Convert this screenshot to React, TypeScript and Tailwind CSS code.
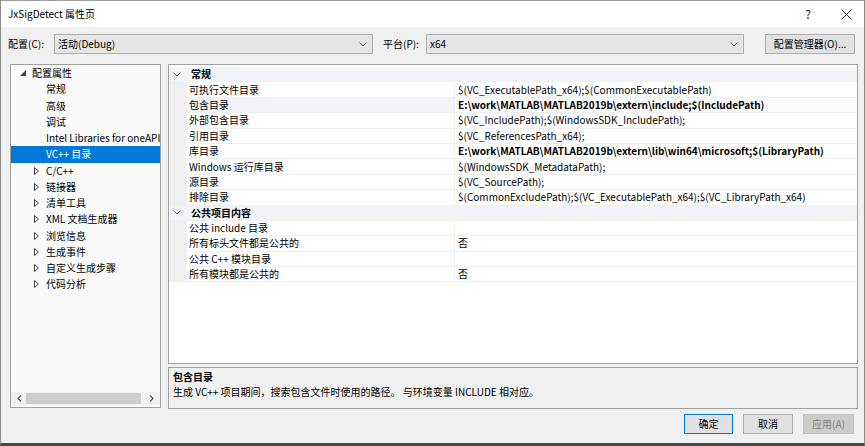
import React from 'react';

const font = "font-['Noto_Sans_CJK_SC','Noto_Sans',sans-serif]";

const treeItems: { label: string; kind: 'root' | 'leaf' | 'branch'; selected?: boolean }[] = [
  { label: '配置属性', kind: 'root' },
  { label: '常规', kind: 'leaf' },
  { label: '高级', kind: 'leaf' },
  { label: '调试', kind: 'leaf' },
  { label: 'Intel Libraries for oneAPI', kind: 'leaf' },
  { label: 'VC++ 目录', kind: 'leaf', selected: true },
  { label: 'C/C++', kind: 'branch' },
  { label: '链接器', kind: 'branch' },
  { label: '清单工具', kind: 'branch' },
  { label: 'XML 文档生成器', kind: 'branch' },
  { label: '浏览信息', kind: 'branch' },
  { label: '生成事件', kind: 'branch' },
  { label: '自定义生成步骤', kind: 'branch' },
  { label: '代码分析', kind: 'branch' },
];

type Row =
  | { type: 'cat'; name: string }
  | { type: 'prop'; name: string; value: string; bold?: boolean; selected?: boolean };

const rows: Row[] = [
  { type: 'cat', name: '常规' },
  { type: 'prop', name: '可执行文件目录', value: '$(VC_ExecutablePath_x64);$(CommonExecutablePath)' },
  { type: 'prop', name: '包含目录', value: 'E:\\work\\MATLAB\\MATLAB2019b\\extern\\include;$(IncludePath)', bold: true, selected: true },
  { type: 'prop', name: '外部包含目录', value: '$(VC_IncludePath);$(WindowsSDK_IncludePath);' },
  { type: 'prop', name: '引用目录', value: '$(VC_ReferencesPath_x64);' },
  { type: 'prop', name: '库目录', value: 'E:\\work\\MATLAB\\MATLAB2019b\\extern\\lib\\win64\\microsoft;$(LibraryPath)', bold: true },
  { type: 'prop', name: 'Windows 运行库目录', value: '$(WindowsSDK_MetadataPath);' },
  { type: 'prop', name: '源目录', value: '$(VC_SourcePath);' },
  { type: 'prop', name: '排除目录', value: '$(CommonExcludePath);$(VC_ExecutablePath_x64);$(VC_LibraryPath_x64)' },
  { type: 'cat', name: '公共项目内容' },
  { type: 'prop', name: '公共 include 目录', value: '' },
  { type: 'prop', name: '所有标头文件都是公共的', value: '否' },
  { type: 'prop', name: '公共 C++ 模块目录', value: '' },
  { type: 'prop', name: '所有模块都是公共的', value: '否' },
];

const Chevron = ({ className = '' }: { className?: string }) => (
  <svg width="8" height="5" viewBox="0 0 8 5" className={className}>
    <path d="M0.5 0.5 L4 4 L7.5 0.5" fill="none" stroke="#606060" strokeWidth="1" />
  </svg>
);

const Combo = ({ value, width }: { value: string; width: string }) => (
  <div className={`${width} h-[20px] bg-[#e5e5e5] border border-[#adadad] flex items-center pl-[3px] pr-[5px]`}>
    <span className="flex-1 text-[#000]">{value}</span>
    <Chevron />
  </div>
);

export default function App() {
  return (
    <div className={`${font} text-[10px] text-black w-[865px] h-[446px] bg-[#f0f0f0] flex flex-col border-x border-b-[3px] border-x-[#8a8a8a] border-b-[#4a4a4a] leading-none overflow-hidden`}>
      {/* title bar */}
      <div className="h-[27px] bg-white flex items-center pl-[7px] pr-[12px] border-t border-[#9a9a9a]">
        <span className="text-[10px] flex-1">JxSigDetect 属性页</span>
        <span className="text-[12px] mr-[30px] text-[#222]">?</span>
        <svg width="11" height="11" viewBox="0 0 11 11">
          <path d="M0.5 0.5 L10.5 10.5 M10.5 0.5 L0.5 10.5" stroke="#333" strokeWidth="1" />
        </svg>
      </div>

      {/* config row */}
      <div className="mt-[7px] h-[20px] flex items-center">
        <span className="ml-[7px] w-[46px]">配置(C):</span>
        <Combo value="活动(Debug)" width="w-[319px]" />
        <span className="ml-[10px] w-[43px]">平台(P):</span>
        <Combo value="x64" width="w-[318px]" />
        <div className="ml-[21px] w-[90px] h-[20px] bg-[#e1e1e1] border border-[#adadad] flex items-center justify-center">
          配置管理器(O)...
        </div>
      </div>

      {/* main area */}
      <div className="mt-[10px] flex">
        {/* tree */}
        <div className="ml-[9px] w-[151px] h-[344px] border border-[#a0a0a0] bg-[#fafafa] flex flex-col">
          <div className="flex-1 overflow-hidden">
            {treeItems.map((it) => (
              <div
                key={it.label}
                className={`h-[16.25px] flex items-center whitespace-nowrap ${it.selected ? 'bg-[#0078d7] text-white' : ''}`}
              >
                {it.kind === 'root' && (
                  <>
                    <svg width="6" height="6" viewBox="0 0 6 6" className="ml-[9px] mr-[6px]">
                      <path d="M6 0 L6 6 L0 6 Z" fill="#404040" />
                    </svg>
                    <span>{it.label}</span>
                  </>
                )}
                {it.kind === 'leaf' && <span className="ml-[35px]">{it.label}</span>}
                {it.kind === 'branch' && (
                  <>
                    <svg width="5" height="8" viewBox="0 0 5 8" className="ml-[23px] mr-[7px]">
                      <path d="M0.5 0.5 L4.5 4 L0.5 7.5 Z" fill="none" stroke="#404040" strokeWidth="1" />
                    </svg>
                    <span>{it.label}</span>
                  </>
                )}
              </div>
            ))}
          </div>
          {/* horizontal scrollbar */}
          <div className="h-[13px] mb-[2px] bg-[#f0f0f0] flex items-center">
            <svg width="5" height="7" viewBox="0 0 5 7" className="ml-[6px] mr-[4px]">
              <path d="M4 0.5 L1 3.5 L4 6.5" fill="none" stroke="#606060" strokeWidth="1.3" />
            </svg>
            <div className="w-[115px] h-[11px] bg-[#cdcdcd]" />
            <svg width="5" height="7" viewBox="0 0 5 7" className="ml-[8px]">
              <path d="M1 0.5 L4 3.5 L1 6.5" fill="none" stroke="#606060" strokeWidth="1.3" />
            </svg>
          </div>
        </div>

        {/* right column */}
        <div className="ml-[7px] w-[690px] flex flex-col">
          <div className="h-[300px] border border-[#a0a0a0] bg-white pt-[2px] flex flex-col">
            {rows.map((r) =>
              r.type === 'cat' ? (
                <div key={r.name} className="h-[15.4px] flex items-center bg-[#f2f4f8] border-b border-[#f0f0f0]">
                  <Chevron className="ml-[4px] mr-[10px]" />
                  <span className="font-bold">{r.name}</span>
                </div>
              ) : (
                <div key={r.name} className="h-[15.4px] flex bg-[#f0f0f0]">
                  <div className={`ml-[18px] w-[267px] flex items-center pl-[2px] border-b border-[#f0f0f0] ${r.selected ? 'bg-[#f3f4f7]' : 'bg-white'}`}>
                    {r.name}
                  </div>
                  <div className={`flex-1 flex items-center pl-[3px] border-l border-b border-[#f0f0f0] whitespace-nowrap ${r.selected ? 'bg-[#fbfbfc]' : 'bg-white'} ${r.bold ? 'font-bold' : ''}`}>
                    {r.value}
                  </div>
                </div>
              )
            )}
            <div className="flex-1 bg-white" />
          </div>

          <div className="mt-[3px] h-[42px] border border-[#a0a0a0] bg-[#f0f0f0] pl-[4px] pt-[4px]">
            <div className="font-bold">包含目录</div>
            <div className="mt-[5px]">生成 VC++ 项目期间，搜索包含文件时使用的路径。 与环境变量 INCLUDE 相对应。</div>
          </div>
        </div>
      </div>

      {/* buttons */}
      <div className="mt-[5px] flex justify-end pr-[10px] gap-[10px]">
        <div className="w-[49px] h-[20px] bg-[#e1e1e1] border border-[#0078d7] flex items-center justify-center">确定</div>
        <div className="w-[50px] h-[20px] bg-[#e1e1e1] border border-[#adadad] flex items-center justify-center">取消</div>
        <div className="w-[51px] h-[20px] bg-[#cccccc] border border-[#bfbfbf] text-[#838383] flex items-center justify-center">应用(A)</div>
      </div>
    </div>
  );
}
